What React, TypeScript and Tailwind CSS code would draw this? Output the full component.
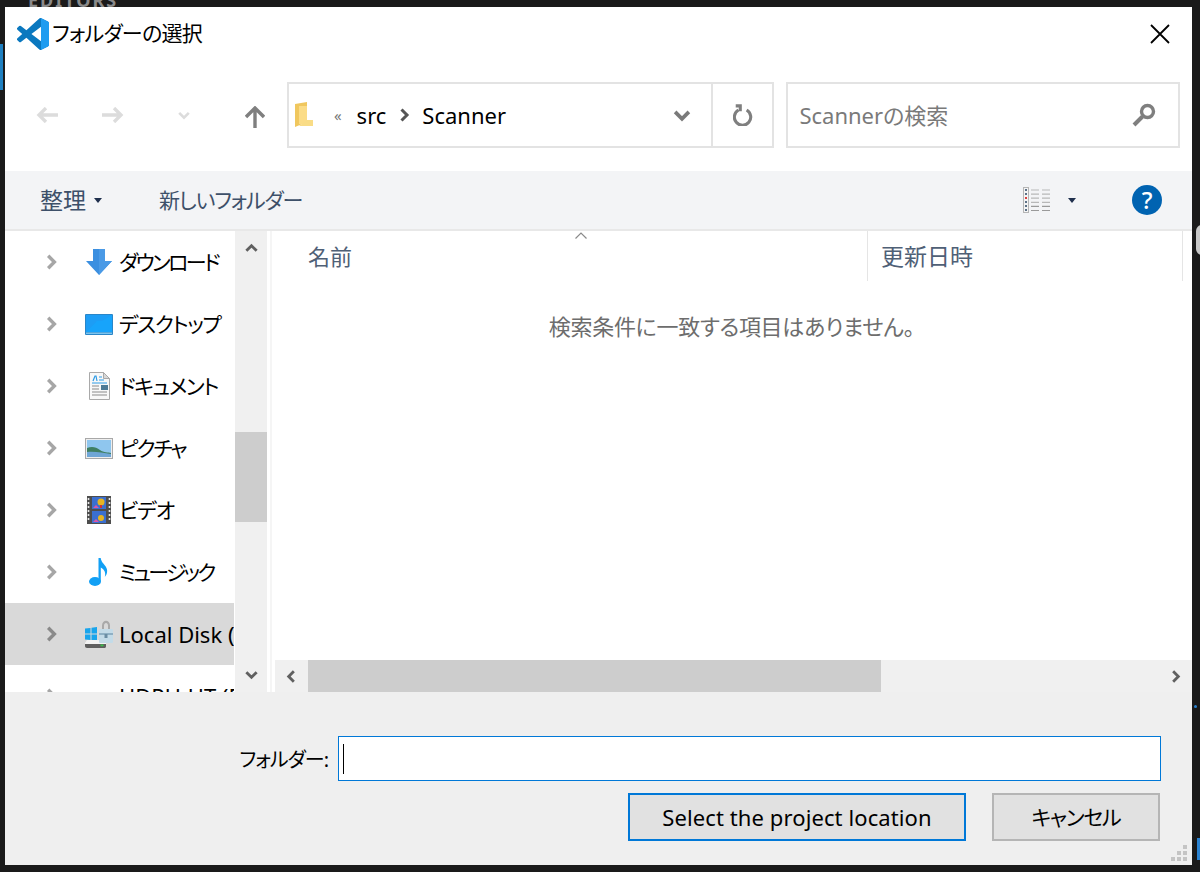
import React from 'react';

const jp = "font-['Noto_Sans','Noto_Sans_CJK_JP',sans-serif] [font-feature-settings:'palt']";

function Chevron({ dir, color, size = 16, width = 3 }: { dir: 'left' | 'right' | 'up' | 'down'; color: string; size?: number; width?: number }) {
  const d = {
    left: 'M10.5 2.5 5 8l5.5 5.5',
    right: 'M5.5 2.5 11 8l-5.5 5.5',
    up: 'M2.5 10.5 8 5l5.5 5.5',
    down: 'M2.5 5.5 8 11l5.5-5.5',
  }[dir];
  return (
    <svg width={size} height={size} viewBox="0 0 16 16" fill="none" stroke={color} strokeWidth={width}>
      <path d={d} />
    </svg>
  );
}

function VsCodeLogo() {
  return (
    <svg width="32" height="32" viewBox="0 0 24 24">
      <path fill="#0a78bf" d="M23.15 2.587L18.21.21a1.494 1.494 0 0 0-1.705.29l-9.46 8.63-4.12-3.128a.999.999 0 0 0-1.276.057L.327 7.261A1 1 0 0 0 .326 8.74L3.899 12 .326 15.26a1 1 0 0 0 .001 1.479L1.65 17.94a.999.999 0 0 0 1.276.057l4.12-3.128 9.46 8.63a1.492 1.492 0 0 0 1.704.29l4.942-2.377A1.5 1.5 0 0 0 24 20.06V3.939a1.5 1.5 0 0 0-.85-1.352zm-5.146 14.861L10.826 12l7.178-5.448v10.896z" />
      <path fill="#1f9cf0" d="M18 0.1 18.21.21l4.94 2.377A1.5 1.5 0 0 1 24 3.939V20.06a1.5 1.5 0 0 1-.85 1.352L18.21 23.79l-.21.1z" />
    </svg>
  );
}

function Arrow({ dir, color }: { dir: 'left' | 'right'; color: string }) {
  return (
    <svg width="22" height="16" viewBox="0 0 22 16" fill="none" stroke={color} strokeWidth="3.4">
      {dir === 'left' ? <path d="M22 8H3M10 1 3 8l7 7" /> : <path d="M0 8h19M12 1l7 7-7 7" />}
    </svg>
  );
}

function Caret({ color }: { color: string }) {
  return (
    <svg width="8" height="5" viewBox="0 0 8 5">
      <path d="M0 0h8L4 5z" fill={color} />
    </svg>
  );
}

function DownloadIcon() {
  return (
    <svg width="26" height="26" viewBox="0 0 26 26">
      <path d="M7 0h12v12h7L13 26 0 12h7z" fill="#3b8fe0" />
      <path d="M13 0h6v12h7L13 26z" fill="#4a9ae6" />
    </svg>
  );
}

function DesktopIcon() {
  return (
    <svg width="28" height="21" viewBox="0 0 28 21">
      <rect width="28" height="21" rx="1" fill="#2a86c8" />
      <rect x="1" y="1" width="26" height="17" fill="#1d9df5" />
      <path d="M1 18 12 7l5 0L27 1v17z" fill="#17a4fb" />
      <rect x="1" y="18.5" width="26" height="1.5" fill="#7cc4ee" />
    </svg>
  );
}

function DocumentIcon() {
  return (
    <svg width="21" height="28" viewBox="0 0 21 28">
      <path d="M.5.5h14l6 6v21H.5z" fill="#f8f8f8" stroke="#a9a9a9" />
      <path d="M14.5.5v6h6z" fill="#d8d8d8" stroke="#a9a9a9" />
      <path d="M4 9 6 4h1l1 5M10 5h3M10 8h5M3 11h15" stroke="#2e9be6" strokeWidth="1.2" fill="none" />
      <rect x="12" y="13" width="7" height="5" fill="#4d7a96" />
      <path d="M3 14h7M3 17h7M3 20h15M3 23h15" stroke="#8a8a8a" strokeWidth="1.2" />
    </svg>
  );
}

function PictureIcon() {
  return (
    <svg width="28" height="21" viewBox="0 0 28 21">
      <rect x=".5" y=".5" width="27" height="20" fill="#eeeeee" stroke="#a8a8a8" />
      <rect x="2" y="2" width="24" height="17" fill="#8fc6ee" />
      <path d="M2 10c5-2 9-1 13 2s8 2 11 3v4H2z" fill="#3f7f62" />
      <path d="M2 14c8-1 16 1 24 2v3H2z" fill="#6fa6d6" />
    </svg>
  );
}

function VideoIcon() {
  return (
    <svg width="24" height="28" viewBox="0 0 24 28">
      <rect width="24" height="28" fill="#4d4d4d" />
      <rect x="5" y="1" width="14" height="12" fill="#3a6fd0" />
      <rect x="5" y="15" width="14" height="12" fill="#3a6fd0" />
      <circle cx="14" cy="6" r="3.5" fill="#e6b422" />
      <path d="M14 9v3" stroke="#c33" strokeWidth="2" />
      <path d="M6 12l3-3 3 3z" fill="#d956a8" />
      <circle cx="14" cy="22" r="3" fill="#e6b422" />
      <path d="M6 26l3-3 3 3z" fill="#d956a8" />
      <path d="M1.5 2v24M22.5 2v24" stroke="#e6e6e6" strokeWidth="1.6" strokeDasharray="2 2" />
    </svg>
  );
}

function MusicIcon() {
  return (
    <svg width="20" height="28" viewBox="0 0 20 28">
      <ellipse cx="6" cy="23.5" rx="6" ry="4.4" fill="#12a0f5" />
      <path d="M9.5 0h2.2c.6 4 3 5.5 5 8.5 2.4 3.7 1.6 7.6-.9 10.5 1-3.6.4-7-4-9.5V23H9.5z" fill="#12a0f5" />
    </svg>
  );
}

function DiskIcon() {
  return (
    <svg width="30" height="28" viewBox="0 0 30 28">
      <path d="M1 8.5 6.5 8v5.5H1zM7.5 7.8l5.5-.8v6.500H7.500zM1 14.500h5.500v5.500L1 19.400zM7.500 14.500H13v6.500l-5.500-.8z" fill="#19a5ec" />
      <path d="M3 20h15l4 3v2H1v-2z" fill="#f2f2f2" />
      <path d="M1 24h21v2.500c0 .8-.7 1.500-1.500 1.500H3c-1.200 0-2-1-2-2z" fill="#5f5f5f" />
      <rect x="16.500" y="24.500" width="3" height="1.800" fill="#38c048" />
      <path d="M18 5.500c0-6.500 8-6.500 8 0V9h-2V5.500c0-3.400-4-3.400-4 0V9h-2z" fill="#a9a9a9" />
      <rect x="15" y="9" width="14" height="14" rx="1" fill="#c3dbe8" />
      <rect x="15" y="13" width="14" height="2" fill="#8fb0c4" />
      <rect x="20.500" y="14" width="3" height="4" fill="#6b8da3" />
    </svg>
  );
}

function ViewIcon() {
  const rows = [0, 1, 2, 3, 4, 5];
  return (
    <svg width="28" height="26" viewBox="0 0 28 26">
      <rect x=".5" y=".5" width="5" height="25" fill="#f4f4f4" stroke="#b5b5b5" />
      {rows.map((r) => (
        <g key={r}>
          <rect x="2" y={2 + r * 4} width="2" height="2" fill={r === 2 ? '#d84040' : '#5d7187'} />
          <path d={`M8 ${3 + r * 4.1}h8M19 ${3 + r * 4.1}h8`} stroke={r > 3 ? '#9a9a9a' : '#b8b8b8'} strokeWidth="1.2" />
        </g>
      ))}
    </svg>
  );
}

const places = [
  { name: 'ダウンロード', icon: <DownloadIcon />, text: 'text-[21px] tracking-[-2.6px]' },
  { name: 'デスクトップ', icon: <DesktopIcon />, text: 'text-[21px] tracking-[-1.3px]' },
  { name: 'ドキュメント', icon: <DocumentIcon />, text: 'text-[21px] tracking-[-1.4px]' },
  { name: 'ピクチャ', icon: <PictureIcon />, text: 'text-[21px] tracking-[-2px]' },
  { name: 'ビデオ', icon: <VideoIcon />, text: 'text-[21px] tracking-[-1.1px]' },
  { name: 'ミュージック', icon: <MusicIcon />, text: 'text-[21px] tracking-[-2.8px]' },
  { name: 'Local Disk (C:)', icon: <DiskIcon />, text: 'text-[22px]', active: true },
  { name: 'HDPU-UT (D:)', icon: null, text: 'text-[22px]' },
];

function PlaceRow({ name, icon, active, text }: { name: string; icon: React.ReactNode; active?: boolean; text: string }) {
  return (
    <div className={`flex h-[62px] shrink-0 items-center overflow-hidden ${active ? 'bg-[#d9d9d9]' : ''}`}>
      <div className="ml-[37px] w-[42px] shrink-0">
        <Chevron dir="right" color={active ? '#8a8a8a' : '#a6a6a6'} size={18} />
      </div>
      <div className="flex w-[30px] shrink-0 justify-center">{icon}</div>
      <span className={`ml-[5px] whitespace-nowrap leading-none text-black ${text}`}>{name}</span>
    </div>
  );
}

export default function App() {
  return (
    <div className={`relative h-[872px] w-[1200px] overflow-hidden bg-[#1a1a1a] pb-[7px] pl-[5px] pr-[8px] pt-[7px] ${jp}`}>
      <div className="absolute left-[28px] top-[-9px] text-[18px] font-bold leading-none tracking-[2px] text-[#8a8a8a]">EDITORS</div>
      <div className="absolute left-0 top-[44px] h-[46px] w-[3px] bg-[#1e7fc0]" />
      <div className="absolute left-[1196px] top-[225px] h-[30px] w-[6px] rounded-l-full bg-[#c8c8c8]" />
      <div className="absolute left-[1194px] top-[705px] size-[3px] rounded-full bg-[#2a82d0]" />
      <div className="absolute left-[1197px] top-[838px] h-[22px] w-[3px] bg-[#2a82d0]" />

      <div className="relative flex h-[858px] flex-col bg-white">
        <div className="flex h-[53px] shrink-0 items-center justify-between pl-[12px] pr-[22px]">
          <div className="flex items-center gap-[3px]">
            <VsCodeLogo />
            <span className="text-[21px] leading-none tracking-[-0.7px] text-black">フォルダーの選択</span>
          </div>
          <svg width="20" height="20" viewBox="0 0 20 20" stroke="#000" strokeWidth="1.8">
            <path d="M1 1l18 18M19 1 1 19" />
          </svg>
        </div>

        <div className="flex h-[111px] shrink-0 items-center pl-[31px] pr-[12px] pb-[1px]">
          <Arrow dir="left" color="#dcdcdc" />
          <div className="ml-[44px]">
            <Arrow dir="right" color="#dcdcdc" />
          </div>
          <div className="ml-[53px]">
            <Chevron dir="down" color="#dcdcdc" size={14} />
          </div>
          <svg className="ml-[54px] mt-[4px]" width="20" height="22" viewBox="0 0 20 22" fill="none" stroke="#7f7f7f" strokeWidth="3.4">
            <path d="M10 22V3M1 11l9-9 9 9" />
          </svg>
          <div className="ml-[22px] flex h-[66px] w-[488px] items-center border-2 border-[#e3e3e3]">
            <svg className="ml-[6px]" width="18" height="26" viewBox="0 0 18 26">
              <path d="M0 2l12-2v20L0 25z" fill="#f0c75e" />
              <path d="M4 4h8v18H4z" fill="#fbdc87" />
              <path d="M12 18h6v6H4z" fill="#f9dc86" />
            </svg>
            <span className="ml-[21px] text-[15px] leading-none tracking-[-1px] text-[#777]">«</span>
            <span className="ml-[16px] text-[22px] leading-none text-black">src</span>
            <div className="ml-[10px]">
              <Chevron dir="right" color="#555" size={16} />
            </div>
            <span className="ml-[10px] text-[22px] leading-none text-black">Scanner</span>
            <div className="ml-auto flex h-full items-center">
              <Chevron dir="down" color="#7a7a7a" size={20} />
              <div className="ml-[19px] flex h-full w-[61px] items-center justify-center border-l-2 border-[#e3e3e3]">
                <svg width="20" height="22" viewBox="0 0 22 24" fill="none" stroke="#7f7f7f" strokeWidth="3.4">
                  <path d="M6 6.5a9 9 0 1 0 9 0M3 2h5v6" />
                </svg>
              </div>
            </div>
          </div>
          <div className="ml-[12px] flex h-[66px] w-[394px] items-center justify-between border-2 border-[#e3e3e3] pl-[11px] pr-[22px]">
            <span className="text-[22px] leading-none text-[#7a7a7a]">Scannerの検索</span>
            <svg width="24" height="24" viewBox="0 0 24 24" fill="none" stroke="#7f7f7f">
              <circle cx="15.5" cy="8.5" r="6" strokeWidth="3.4" />
              <path d="M10.5 13.5 2 22" strokeWidth="4" />
            </svg>
          </div>
        </div>

        <div className="flex h-[60px] shrink-0 items-center border-b-2 border-[#e8e8e8] bg-[#f3f4f6] pl-[35px] pr-[30px]">
          <span className="text-[23px] leading-none text-[#3d5069]">整理</span>
          <div className="ml-[8px] flex">
            <Caret color="#1f2f4d" />
          </div>
          <span className="ml-[57px] text-[21px] leading-none tracking-[-1.1px] text-[#3d5069]">新しいフォルダー</span>
          <div className="ml-auto flex items-center">
            <ViewIcon />
            <div className="ml-[17px]">
              <Caret color="#1f2f4d" />
            </div>
            <div className="ml-[56px] flex size-[30px] items-center justify-center rounded-full bg-[#0063b1] text-[24px] font-medium leading-none text-white">?</div>
          </div>
        </div>

        <div className="flex h-[461px] shrink-0">
          <div className="flex w-[229px] shrink-0 flex-col overflow-hidden">
            {places.map((p) => (
              <PlaceRow key={p.name} name={p.name} icon={p.icon} active={p.active} text={p.text} />
            ))}
          </div>
          <div className="ml-[1px] flex w-[32px] shrink-0 flex-col items-center bg-[#f0f0f0]">
            <div className="mt-[10px]">
              <Chevron dir="up" color="#606060" size={15} />
            </div>
            <div className="mt-[176px] h-[90px] w-full bg-[#cdcdcd]" />
            <div className="mt-[145px]">
              <Chevron dir="down" color="#606060" size={15} />
            </div>
          </div>
          <div className="ml-[3px] w-[2px] shrink-0 bg-[#f5f5f5]" />
          <div className="ml-[3px] flex min-w-0 flex-1 flex-col">
            <div className="relative flex h-[50px] shrink-0 items-center">
              <div className="flex h-full w-[593px] items-center border-r border-[#e5e5e5] pl-[33px] text-[22px] leading-none text-[#4f6076]">名前</div>
              <div className="flex h-full w-[315px] items-center border-r border-[#e5e5e5] pl-[13px] text-[23px] leading-none text-[#4f6076]">更新日時</div>
              <svg className="absolute left-[300px] top-[1px]" width="12" height="7" viewBox="0 0 12 7" fill="none" stroke="#8a8a8a" strokeWidth="1.2">
                <path d="M.5 6.5 6 1l5.5 5.5" />
              </svg>
            </div>
            <div className="flex-1 pr-[4px] pt-[34px]">
              <p className="text-center text-[22px] leading-none tracking-[-0.3px] text-[#6d6d6d]">検索条件に一致する項目はありません。</p>
            </div>
            <div className="flex h-[32px] shrink-0 items-center bg-[#f0f0f0]">
              <div className="flex h-full w-[33px] shrink-0 items-center justify-center">
                <Chevron dir="left" color="#606060" size={15} />
              </div>
              <div className="h-full w-[573px] bg-[#cdcdcd]" />
              <div className="ml-auto flex h-full w-[33px] items-center justify-center">
                <Chevron dir="right" color="#606060" size={15} />
              </div>
            </div>
          </div>
        </div>

        <div className="relative flex flex-1 flex-col items-end bg-[#efefef] pr-[31px] pt-[44px]">
          <div className="flex items-center">
            <span className="mt-[3px] text-[20px] leading-none tracking-[-1px] text-black">フォルダー:</span>
            <div className="ml-[10px] flex h-[45px] w-[823px] items-center border border-[#0078d7] bg-white pl-[4px]">
              <div className="h-[30px] w-[1px] bg-black" />
            </div>
          </div>
          <div className="mr-[1px] mt-[12px] flex items-center">
            <div className="flex h-[48px] w-[338px] items-center justify-center border-2 border-[#0078d7] bg-[#e1e1e1] text-[22px] leading-none tracking-[0.1px] text-black">Select the project location</div>
            <div className="ml-[26px] flex h-[48px] w-[168px] items-center justify-center border-2 border-[#b5b5b5] bg-[#e1e1e1] text-[21px] leading-none tracking-[-1.2px] text-black">キャンセル</div>
          </div>
          <svg className="absolute bottom-[4px] right-[5px]" width="16" height="16" viewBox="0 0 16 16" fill="#c4c4c4">
            <path d="M12 0h4v4h-4zM6 6h4v4H6zM12 6h4v4h-4zM0 12h4v4H0zM6 12h4v4H6zM12 12h4v4h-4z" />
          </svg>
        </div>
      </div>
    </div>
  );
}
